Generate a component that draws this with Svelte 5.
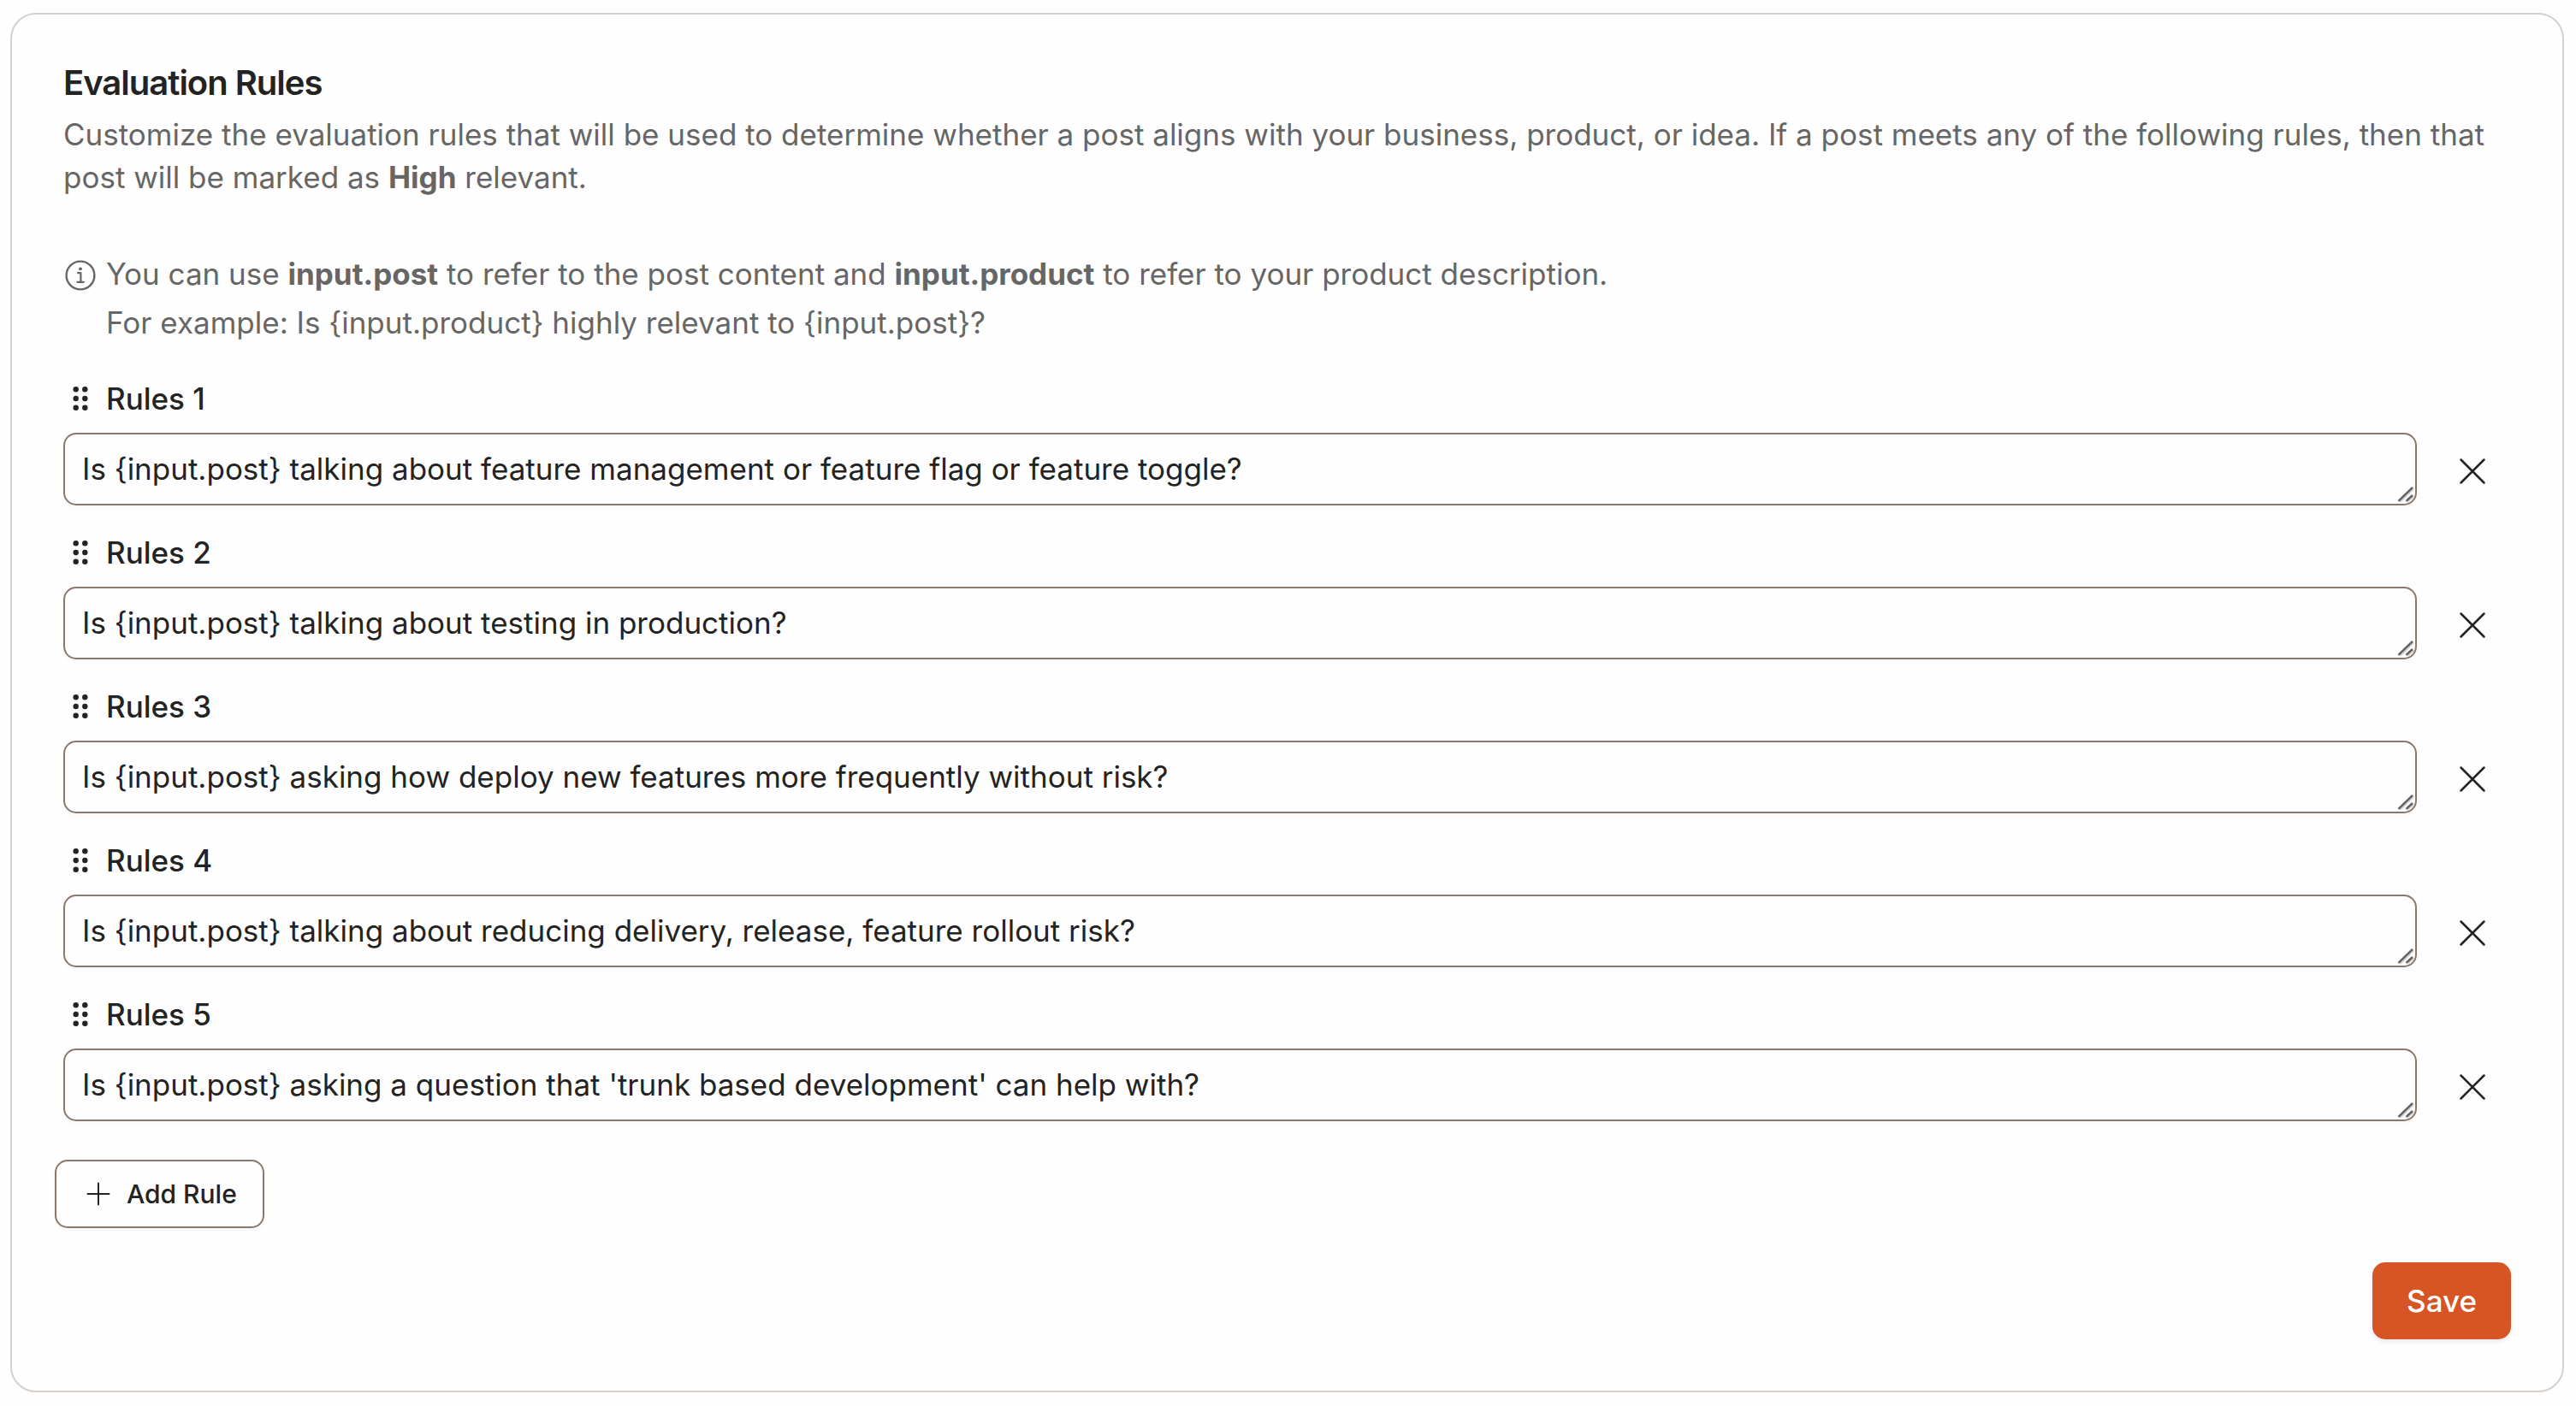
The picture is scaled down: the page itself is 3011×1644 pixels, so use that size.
<script>
  let nextId = 6;
  let rules = $state([
    { id: 1, text: 'Is {input.post} talking about feature management or feature flag or feature toggle?' },
    { id: 2, text: 'Is {input.post} talking about testing in production?' },
    { id: 3, text: 'Is {input.post} asking how deploy new features more frequently without risk?' },
    { id: 4, text: 'Is {input.post} talking about reducing delivery, release, feature rollout risk?' },
    { id: 5, text: "Is {input.post} asking a question that 'trunk based development' can help with?" }
  ]);

  function addRule() {
    rules.push({ id: nextId++, text: '' });
  }

  function removeRule(id) {
    rules = rules.filter((rule) => rule.id !== id);
  }
</script>

<main class="card">
  <header>
    <h1>Evaluation Rules</h1>
    <p class="description">
      Customize the evaluation rules that will be used to determine whether a post aligns with your
      business, product, or idea. If a post meets any of the following rules, then that post will be
      marked as <strong>High</strong> relevant.
    </p>
  </header>

  <form onsubmit={(event) => event.preventDefault()}>
    <div class="hint">
      <svg class="info" viewBox="0 0 40 40" aria-hidden="true">
        <circle cx="20" cy="20" r="16.4" fill="none" stroke="currentColor" stroke-width="2.4" />
        <circle cx="20" cy="12.3" r="1.9" fill="currentColor" />
        <path d="M17 17.2h3.4v10.4M16.4 27.8h7.4" fill="none" stroke="currentColor" stroke-width="2.2" stroke-linecap="round" stroke-linejoin="round" />
      </svg>
      <div>
        <p>You can use <strong>input.post</strong> to refer to the post content and <strong>input.product</strong> to refer to your product description.</p>
        <p>{'For example: Is {input.product} highly relevant to {input.post}?'}</p>
      </div>
    </div>

    <ol class="rules">
      {#each rules as rule, index (rule.id)}
        <li>
          <div class="rule-title">
            <svg class="grip" viewBox="0 0 40 40" fill="currentColor" aria-hidden="true">
              <circle cx="14.7" cy="9.3" r="3.2" />
              <circle cx="25.3" cy="9.3" r="3.2" />
              <circle cx="14.7" cy="20" r="3.2" />
              <circle cx="25.3" cy="20" r="3.2" />
              <circle cx="14.7" cy="30.7" r="3.2" />
              <circle cx="25.3" cy="30.7" r="3.2" />
            </svg>
            <label for="rule-{rule.id}">Rules {index + 1}</label>
          </div>
          <div class="rule-row">
            <div class="field">
              <textarea id="rule-{rule.id}" rows="1" bind:value={rule.text}></textarea>
              <svg class="resizer" viewBox="0 0 20 20" aria-hidden="true">
                <path d="M3.5 18.8L19.5 3.2M12.5 18.8L19.5 12.2" stroke="#d0d0d0" stroke-width="2" />
                <path d="M1.5 17.8L18 1.8M10.5 17.8L18 11" stroke="#5f5f5f" stroke-width="2.4" />
              </svg>
            </div>
            <button type="button" class="remove" aria-label="Remove rule {index + 1}" onclick={() => removeRule(rule.id)}>
              <svg viewBox="0 0 40 40" aria-hidden="true">
                <path d="M6.5 6.5l27 27M33.5 6.5l-27 27" fill="none" stroke="currentColor" stroke-width="2.5" stroke-linecap="round" />
              </svg>
            </button>
          </div>
        </li>
      {/each}
    </ol>

    <button type="button" class="add" onclick={addRule}>
      <svg viewBox="0 0 30 30" aria-hidden="true">
        <path d="M15 2.5v25M2.5 15h25" fill="none" stroke="currentColor" stroke-width="2" stroke-linecap="round" />
      </svg>
      Add Rule
    </button>

    <div class="actions">
      <button type="submit" class="save">Save</button>
    </div>
  </form>
</main>

<style>
  :global(body) {
    background: #fefefe;
  }

  .card {
    margin: 15px 14px 15px 12px;
    padding: 60px;
    border: 2px solid #d6cfca;
    border-radius: 30px;
    color: #232323;
    font-family: Inter, 'Liberation Sans', sans-serif;
    font-size: 35px;
    line-height: 50px;
  }

  h1,
  p,
  ol {
    margin: 0;
    padding: 0;
  }

  h1 {
    font-size: 40px;
    font-weight: 600;
    line-height: 40px;
    letter-spacing: -0.025em;
  }

  .description {
    margin-top: 15px;
    color: #666;
  }

  strong {
    font-weight: 700;
  }

  .hint {
    display: flex;
    gap: 10px;
    margin-top: 60px;
    color: #666;
    line-height: 57px;
  }

  .info {
    flex: none;
    width: 40px;
    height: 40px;
    margin-top: 10px;
  }

  .rules {
    display: grid;
    gap: 32px;
    margin-top: 42px;
    list-style: none;
  }

  .rule-title {
    display: flex;
    align-items: center;
    gap: 10px;
    height: 35px;
    margin-bottom: 23px;
    font-weight: 500;
  }

  .grip {
    width: 40px;
    height: 40px;
  }

  .rule-row {
    display: grid;
    grid-template-columns: 1fr 90px;
    align-items: start;
    gap: 20px;
  }

  .field {
    position: relative;
    display: grid;
  }

  textarea {
    box-sizing: border-box;
    height: 85px;
    padding: 15px 20px;
    border: 2px solid #8b776c;
    border-radius: 15px;
    background: transparent;
    box-shadow: 0 3px 5px rgb(0 0 0 / 3%);
    color: inherit;
    font: inherit;
    overflow: hidden;
    resize: none;
  }

  .resizer {
    position: absolute;
    right: 3px;
    bottom: 3px;
    width: 20px;
    height: 20px;
    pointer-events: none;
  }

  button {
    display: flex;
    align-items: center;
    justify-content: center;
    box-sizing: border-box;
    padding: 0;
    border: 0;
    border-radius: 15px;
    background: transparent;
    color: inherit;
    font: inherit;
    font-weight: 500;
    cursor: pointer;
  }

  .remove {
    height: 90px;
  }

  .remove svg {
    width: 40px;
    height: 40px;
  }

  .add {
    gap: 18px;
    height: 80px;
    margin: 40px 0 0 -10px;
    padding: 0 30px 0 34px;
    border: 2px solid #8b776c;
    box-shadow: 0 3px 5px rgb(0 0 0 / 3%);
    font-size: 30px;
  }

  .add svg {
    width: 30px;
    height: 30px;
  }

  .actions {
    display: flex;
    justify-content: flex-end;
    margin-top: 40px;
  }

  .save {
    height: 90px;
    padding: 0 40px;
    background: #d75424;
    box-shadow: 0 3px 6px rgb(0 0 0 / 8%);
    color: #fff;
  }
</style>
